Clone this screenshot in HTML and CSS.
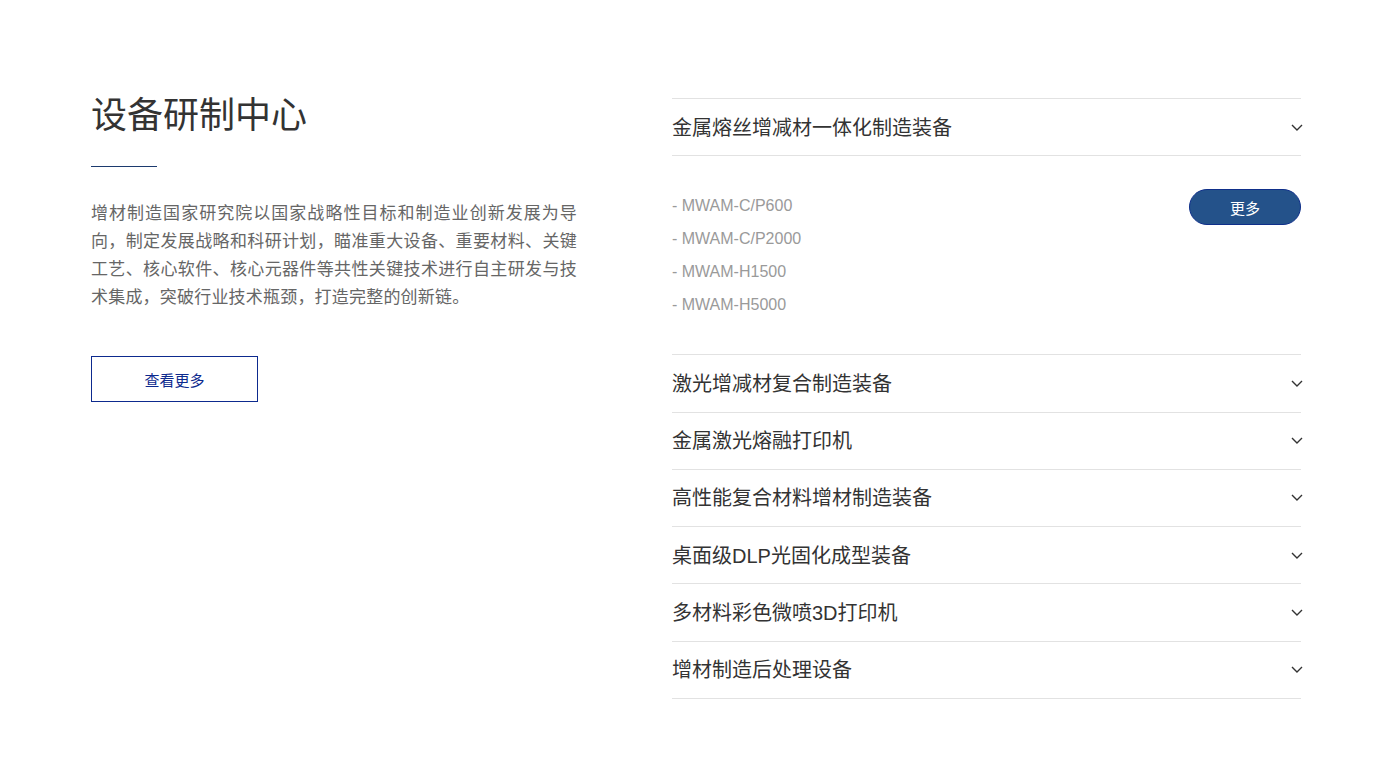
FILE: index.html
```html
<!DOCTYPE html>
<html lang="zh-CN">
<head>
<meta charset="utf-8">
<title>设备研制中心</title>
<link rel="stylesheet" href="styles.css">
</head>
<body>
<section class="wrap">
  <div class="intro">
    <h2 class="intro-title">设备研制中心</h2>
    <div class="intro-line"></div>
    <p class="intro-text">增材制造国家研究院以国家战略性目标和制造业创新发展为导向，制定发展战略和科研计划，瞄准重大设备、重要材料、关键工艺、核心软件、核心元器件等共性关键技术进行自主研发与技术集成，突破行业技术瓶颈，打造完整的创新链。</p>
    <a class="intro-btn" href="#">查看更多</a>
  </div>
  <div class="acc">
    <div class="acc-item open">
      <div class="acc-head">
        <span class="acc-title">金属熔丝增减材一体化制造装备</span>
        <svg class="chev" viewBox="0 0 12 7" width="12" height="7"><polyline points="1,1 6,6 11,1" fill="none" stroke="#333" stroke-width="1.4"/></svg>
      </div>
      <div class="acc-panel">
        <ul class="models">
          <li>- MWAM-C/P600</li>
          <li>- MWAM-C/P2000</li>
          <li>- MWAM-H1500</li>
          <li>- MWAM-H5000</li>
        </ul>
        <a class="more-btn" href="#">更多</a>
      </div>
    </div>
    <div class="acc-item">
      <div class="acc-head">
        <span class="acc-title">激光增减材复合制造装备</span>
        <svg class="chev" viewBox="0 0 12 7" width="12" height="7"><polyline points="1,1 6,6 11,1" fill="none" stroke="#333" stroke-width="1.4"/></svg>
      </div>
    </div>
    <div class="acc-item">
      <div class="acc-head">
        <span class="acc-title">金属激光熔融打印机</span>
        <svg class="chev" viewBox="0 0 12 7" width="12" height="7"><polyline points="1,1 6,6 11,1" fill="none" stroke="#333" stroke-width="1.4"/></svg>
      </div>
    </div>
    <div class="acc-item">
      <div class="acc-head">
        <span class="acc-title">高性能复合材料增材制造装备</span>
        <svg class="chev" viewBox="0 0 12 7" width="12" height="7"><polyline points="1,1 6,6 11,1" fill="none" stroke="#333" stroke-width="1.4"/></svg>
      </div>
    </div>
    <div class="acc-item">
      <div class="acc-head">
        <span class="acc-title">桌面级DLP光固化成型装备</span>
        <svg class="chev" viewBox="0 0 12 7" width="12" height="7"><polyline points="1,1 6,6 11,1" fill="none" stroke="#333" stroke-width="1.4"/></svg>
      </div>
    </div>
    <div class="acc-item">
      <div class="acc-head">
        <span class="acc-title">多材料彩色微喷3D打印机</span>
        <svg class="chev" viewBox="0 0 12 7" width="12" height="7"><polyline points="1,1 6,6 11,1" fill="none" stroke="#333" stroke-width="1.4"/></svg>
      </div>
    </div>
    <div class="acc-item">
      <div class="acc-head">
        <span class="acc-title">增材制造后处理设备</span>
        <svg class="chev" viewBox="0 0 12 7" width="12" height="7"><polyline points="1,1 6,6 11,1" fill="none" stroke="#333" stroke-width="1.4"/></svg>
      </div>
    </div>
  </div>
</section>
</body>
</html>
```

FILE: styles.css
```css
* { box-sizing: border-box; }
html, body { margin: 0; padding: 0; background: #fff; }
body {
  font-family: "Liberation Sans", "Noto Sans CJK SC", sans-serif;
  color: #333;
}
.wrap {
  width: 1210px;
  margin-left: 91px;
  padding-top: 94px;
  display: flex;
  justify-content: space-between;
  align-items: flex-start;
}
.intro { width: 486px; }
.intro-title {
  margin: 0;
  font-size: 36px;
  font-weight: normal;
  line-height: 44px;
  color: #333;
}
.intro-line {
  width: 66px;
  height: 1px;
  background: #1c3a6e;
  margin-top: 28px;
}
.intro-text {
  margin: 33px 0 0;
  font-size: 17px;
  letter-spacing: 0.2px;
  line-height: 28px;
  color: #666;
  text-align: justify;
}
.intro-btn {
  display: flex;
  align-items: center;
  justify-content: center;
  width: 167px;
  height: 46px;
  margin-top: 44px;
  border: 1px solid #0d2a8e;
  color: #0d2a8e;
  font-size: 15px;
  text-decoration: none;
}
.acc {
  width: 629px;
  margin-top: 4px;
  border-bottom: 1px solid #e2e2e2;
}
.acc-item { border-top: 1px solid #e2e2e2; }
.acc-head {
  height: 56.25px;
  display: flex;
  align-items: center;
  justify-content: space-between;
}
.acc-title {
  font-size: 20px;
  color: #333;
  padding-bottom: 2px;
}
.chev { margin-right: -2px; margin-top: 0; }
.acc-panel {
  border-top: 1px solid #e2e2e2;
  padding: 33px 0 33px;
  display: flex;
  justify-content: space-between;
  align-items: flex-start;
}
.models {
  list-style: none;
  margin: 0;
  padding: 0;
}
.models li {
  font-size: 16px;
  line-height: 33px;
  color: #9a9a9a;
}
.more-btn {
  display: flex;
  align-items: center;
  justify-content: center;
  width: 112px;
  height: 36px;
  border-radius: 18px;
  background: #24528a;
  border: 1px solid #0f2f8a;
  color: #fff;
  font-size: 15px;
  text-decoration: none;
}
```
